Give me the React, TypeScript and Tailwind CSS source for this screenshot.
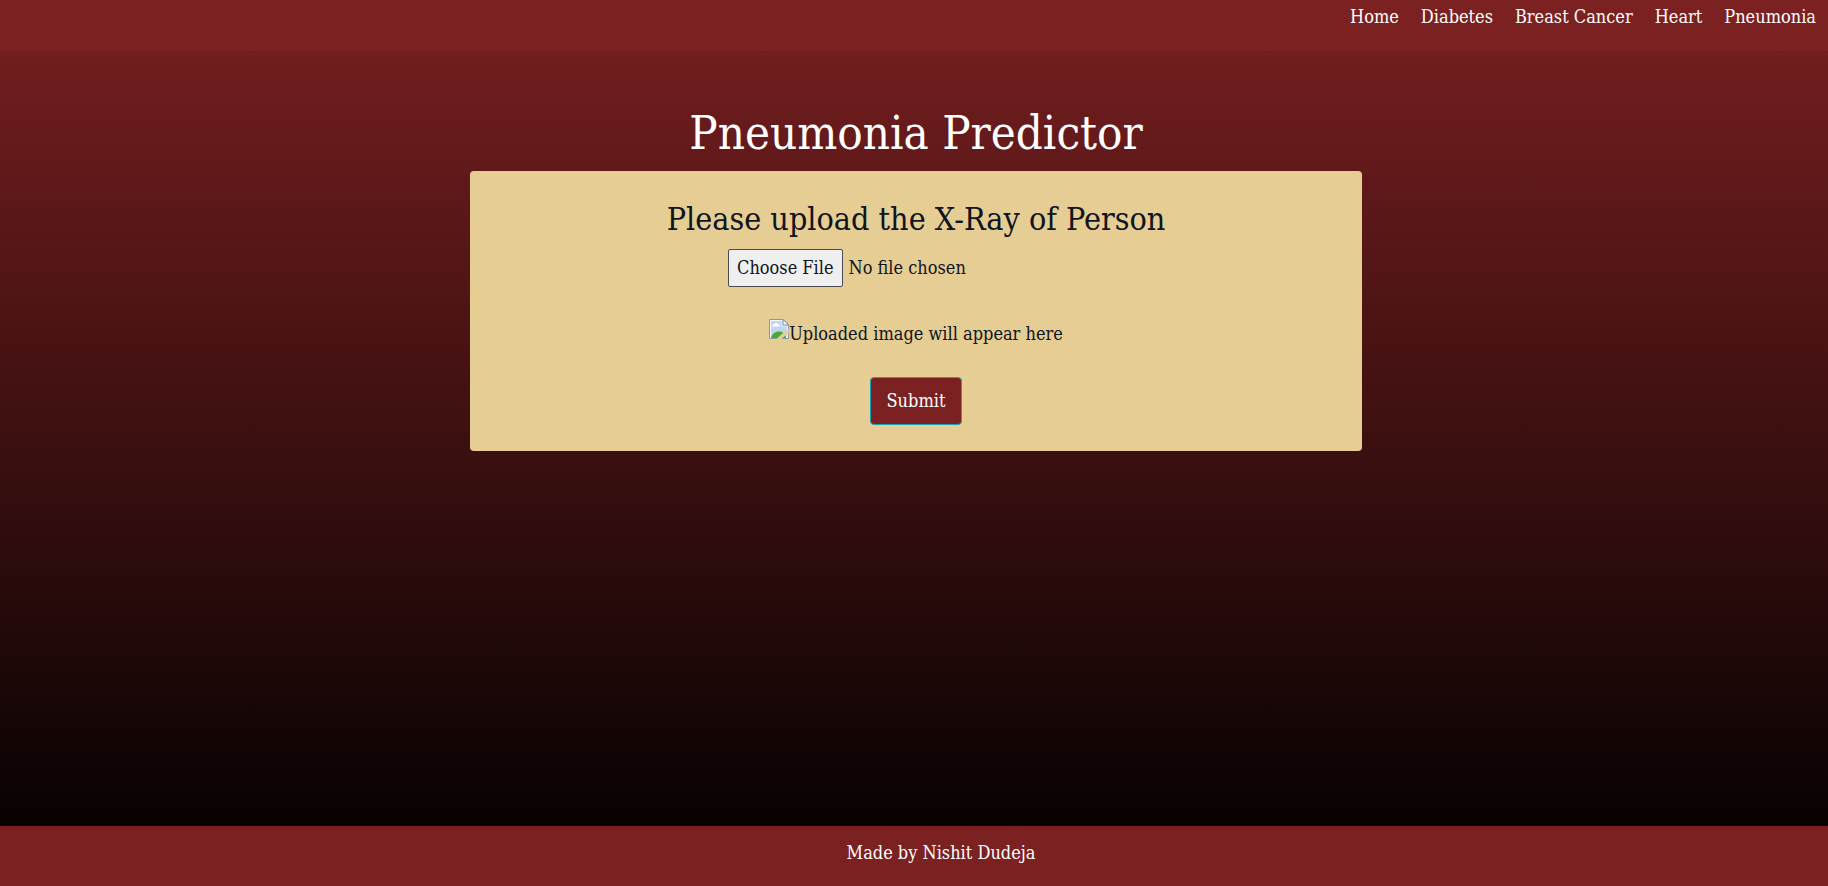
const links = ['Home', 'Diabetes', 'Breast Cancer', 'Heart', 'Pneumonia'];

function PlaceholderIcon() {
  return (
    <svg width="20" height="20" viewBox="0 0 20 20" aria-hidden="true" className="shrink-0">
      <path d="M.5.5H14L19.500 6V19.500H.5Z" fill="#c2d5f5" stroke="#8b95a5" />
      <path d="M1.500 1.500H13V7H18.500V18.500H1.500Z" fill="#c2d5f5" stroke="#f4f8ff" strokeWidth="1" />
      <path d="M3 7.500c0-1.600 1.200-2.200 2.200-2 .6-2 3.600-2 4 0 1.500 0 1.800 1.200 1.600 2Z" fill="#fff" />
      <path d="M2 19c1-4 4-6.500 8-6.500 3.500 0 6 1.500 7 6.500Z" fill="#4ba82f" />
      <path d="M14 .5V6H19.500Z" fill="#fff" stroke="#858b96" strokeWidth="1" />
      <path d="M20 10V13.500L12.500 20H7.500L15 13Z" fill="#e5cd93" />
    </svg>
  );
}

export default function App() {
  return (
    <div className="flex min-h-screen flex-col bg-linear-to-b/srgb from-[#781f20] to-black font-['DejaVu_Serif_Condensed','DejaVu_Serif',serif] text-[18px] leading-[30px] text-white">
      <nav className="h-[51px] bg-[#7c2121] px-3">
        <ul className="flex justify-end gap-[22px] pt-0.5">
          {links.map((label) => (
            <li key={label}>
              <a href="#">{label}</a>
            </li>
          ))}
        </ul>
      </nav>
      <main className="flex grow flex-col items-center pt-[50px] pl-1">
        <h1 className="mb-1.5 text-[47px] leading-16">Pneumonia Predictor</h1>
        <form className="flex w-[892px] max-w-full flex-col items-center rounded bg-[#e5cd93] px-5 py-[26px] text-[#10141c]">
          <h2 className="mb-2 text-center text-[32px] leading-[44px]">Please upload the X-Ray of Person</h2>
          <input
            type="file"
            aria-label="X-Ray image"
            className="mb-8 w-[376px] max-w-full file:mr-1.5 file:rounded-[2px] file:border file:border-solid file:border-[#4a4a55] file:bg-[#efefef] file:px-2 file:py-[3px] file:text-[#10141c]"
          />
          <p className="mb-7 flex">
            <PlaceholderIcon />
            <span>Uploaded image will appear here</span>
          </p>
          <button type="submit" className="rounded border border-[#17a2b8] bg-[#7c2121] px-4 py-2 text-white">
            Submit
          </button>
        </form>
      </main>
      <footer className="h-15 bg-[#7c2121] pt-3 pl-[54px] text-center">Made by Nishit Dudeja</footer>
    </div>
  );
}
